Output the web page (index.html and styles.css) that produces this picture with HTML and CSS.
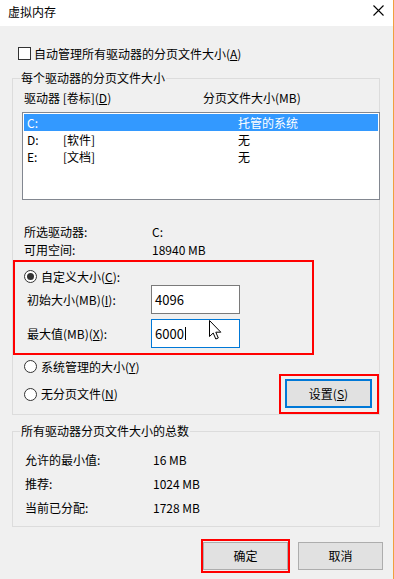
FILE: index.html
```html
<!DOCTYPE html>
<html lang="zh-CN">
<head>
<meta charset="utf-8">
<title>虚拟内存</title>
<link rel="stylesheet" href="styles.css">
</head>
<body>
<div class="window">
  <div class="titlebar">
    <span class="title">虚拟内存</span>
    <svg class="close" width="11" height="11" viewBox="0 0 11 11"><path d="M0.5 0.5L10.5 10.5M10.5 0.5L0.5 10.5" stroke="#000" stroke-width="1.1" fill="none"/></svg>
  </div>

  <div class="check-row"><span class="checkbox"></span><span>自动管理所有驱动器的分页文件大小(<u>A</u>)</span></div>

  <div class="group group1">
    <div class="group-title">每个驱动器的分页文件大小</div>
    <div class="list-header"><span class="hcol1">驱动器 [卷标](<u>D</u>)</span><span>分页文件大小(MB)</span></div>
    <div class="listbox">
      <div class="lrow selected"><span class="c1">C:</span><span class="c2"></span><span>托管的系统</span></div>
      <div class="lrow"><span class="c1">D:</span><span class="c2">[软件]</span><span>无</span></div>
      <div class="lrow"><span class="c1">E:</span><span class="c2">[文档]</span><span>无</span></div>
    </div>
    <div class="info-row first"><span class="info-label">所选驱动器:</span><span>C:</span></div>
    <div class="info-row"><span class="info-label">可用空间:</span><span>18940 MB</span></div>

    <div class="redbox custom">
      <div class="radio-row"><span class="radio checked"></span><span>自定义大小(<u>C</u>):</span></div>
      <div class="field-row"><span class="field-label">初始大小(MB)(<u>I</u>):</span><div class="input">4096</div></div>
      <div class="field-row second"><span class="field-label">最大值(MB)(<u>X</u>):</span><div class="input focused">6000<span class="caret"></span><svg class="pointer" width="13" height="20" viewBox="0 0 13 20"><path d="M0.5 0.5L0.5 16.5L4.2 13L6.8 19L9.3 18L6.8 12.2L11.8 12.2Z" fill="#fff" stroke="#000" stroke-width="1" stroke-linejoin="round"/></svg></div></div>
    </div>

    <div class="radio-row sys"><span class="radio"></span><span>系统管理的大小(<u>Y</u>)</span></div>
    <div class="bottom-row">
      <div class="radio-row"><span class="radio"></span><span>无分页文件(<u>N</u>)</span></div>
      <div class="redbox setbox"><div class="btn set">设置(<u>S</u>)</div></div>
    </div>
  </div>

  <div class="group group2">
    <div class="group-title">所有驱动器分页文件大小的总数</div>
    <div class="sum-row first"><span class="sum-label">允许的最小值:</span><span>16 MB</span></div>
    <div class="sum-row"><span class="sum-label">推荐:</span><span>1024 MB</span></div>
    <div class="sum-row"><span class="sum-label">当前已分配:</span><span>1728 MB</span></div>
  </div>

  <div class="dialog-buttons">
    <div class="redbox okbox"><div class="btn">确定</div></div>
    <div class="btn">取消</div>
  </div>
</div>
</body>
</html>
```

FILE: styles.css
```css
* { box-sizing: border-box; }
html, body { margin: 0; padding: 0; }
body {
  font-family: "Noto Sans CJK SC", "Microsoft YaHei", sans-serif;
  font-size: 12px;
  color: #000;
  background: #f0f0f0;
}
u { text-decoration: underline; text-underline-offset: 1px; }

.window {
  width: 394px;
  height: 579px;
  background: #f0f0f0;
  border-right: 1px solid #f0a040;
  display: flex;
  flex-direction: column;
  overflow: hidden;
}

.titlebar {
  height: 26px;
  background: #fff;
  display: flex;
  justify-content: space-between;
  align-items: flex-start;
  flex: none;
}
.title {
  margin: 4px 0 0 8px;
  line-height: 16px;
}
.close {
  margin: 5px 9px 0 0;
}

.check-row {
  margin: 21px 0 0 18px;
  height: 13px;
  display: flex;
  align-items: center;
  gap: 3px;
  line-height: 16px;
}
.checkbox {
  width: 13px;
  height: 13px;
  border: 1px solid #333;
  background: #fff;
  flex: none;
}

.group {
  margin-left: 12px;
  width: 368px;
  border: 1px solid #dcdcdc;
  display: flex;
  flex-direction: column;
  flex: none;
}
.group1 { margin-top: 18px; }
.group-title {
  align-self: flex-start;
  margin: -9px 0 0 7px;
  padding: 0 1px;
  line-height: 16px;
  background: #f0f0f0;
}

.list-header {
  margin-top: 4px;
  padding-left: 11px;
  line-height: 16px;
  display: flex;
}
.hcol1 { width: 179px; }

.listbox {
  margin: 6px 0 0 9px;
  width: 358px;
  height: 88px;
  border: 1px solid #828790;
  background: #fff;
  padding: 1px 1px 0 1px;
}
.lrow {
  height: 17px;
  line-height: 17px;
  padding-left: 3px;
  display: flex;
}
.lrow.selected { background: #3399ff; color: #fff; }
.c1 { width: 36px; }
.c2 { width: 175px; }

.info-row {
  padding-left: 11px;
  line-height: 18px;
  display: flex;
}
.info-row.first { margin-top: 23px; }
.info-label { width: 128px; }

.redbox {
  border: 2px solid #ff0000;
}
.custom {
  margin-top: 1px;
  width: 301px;
  padding: 8px 0 5px 0;
}

.radio-row {
  display: flex;
  align-items: center;
  gap: 4px;
  height: 13px;
  line-height: 16px;
}
.custom .radio-row { margin-left: 9px; }
.radio {
  width: 13px;
  height: 13px;
  border: 1px solid #333;
  border-radius: 50%;
  background: #fff;
  flex: none;
  display: flex;
  align-items: center;
  justify-content: center;
}
.radio.checked::after {
  content: "";
  width: 7px;
  height: 7px;
  border-radius: 50%;
  background: #333;
}

.field-row {
  margin-top: 2px;
  height: 29px;
  padding-left: 12px;
  display: flex;
  align-items: center;
}
.field-row.second { margin-top: 5px; }
.field-label { width: 124px; }
.input {
  position: relative;
  width: 89px;
  height: 29px;
  border: 1px solid #7a7a7a;
  background: #fff;
  padding-left: 3px;
  font-size: 13px;
  line-height: 27px;
  display: flex;
  align-items: center;
}
.input.focused { border-color: #0078d7; }
.caret {
  width: 1px;
  height: 13px;
  background: #000;
  margin-left: 1px;
}
.pointer {
  position: absolute;
  left: 57px;
  top: 0;
}

.sys {
  margin: 5px 0 0 11px;
}
.bottom-row {
  margin-top: 1px;
  padding-left: 11px;
  display: flex;
  justify-content: space-between;
  align-items: center;
}
.setbox {
  width: 100px;
  height: 40px;
  padding: 3px 5px 4px 4px;
}

.btn {
  width: 85px;
  height: 28px;
  background: #e1e1e1;
  border: 1px solid #adadad;
  display: flex;
  align-items: center;
  justify-content: center;
  line-height: 16px;
  flex: none;
}
.btn.set {
  width: 87px;
  height: 29px;
  border: 2px solid #0078d7;
}

.group2 {
  margin-top: 16px;
  padding-bottom: 6px;
}
.sum-row {
  padding-left: 12px;
  line-height: 24px;
  display: flex;
}
.sum-row.first { margin-top: 9px; }
.sum-label { width: 128px; }

.dialog-buttons {
  margin-top: 12px;
  padding-right: 10px;
  display: flex;
  justify-content: flex-end;
  align-items: center;
  gap: 8px;
}
.okbox {
  padding: 1px 0;
}
```
